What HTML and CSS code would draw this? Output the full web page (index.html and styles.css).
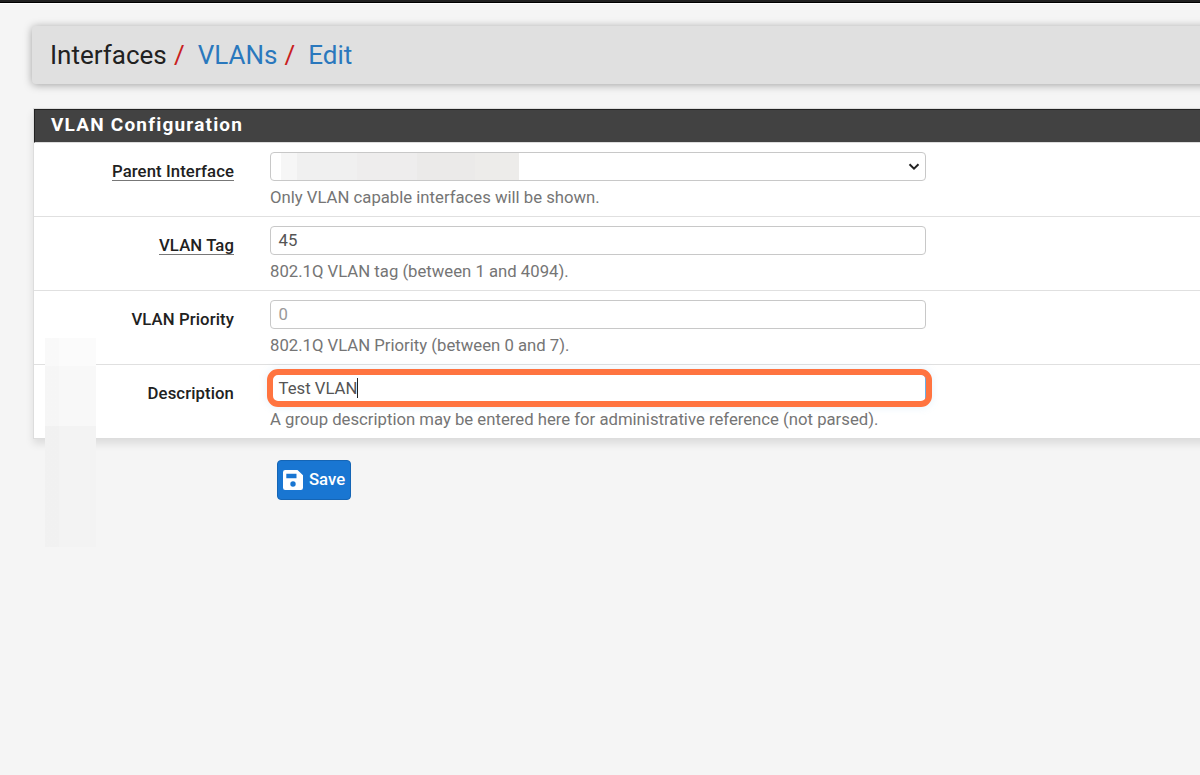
FILE: index.html
```html
<!DOCTYPE html>
<html lang="en">
<head>
<meta charset="utf-8">
<title>Interfaces: VLANs: Edit</title>
<link rel="stylesheet" href="styles.css">
</head>
<body>
<div class="topbar"></div>
<header class="breadcrumb">
  <span>Interfaces</span><span class="sep">/</span><a>VLANs</a><span class="sep">/</span><a>Edit</a>
</header>
<main class="panel">
  <h2 class="panel-title">VLAN Configuration</h2>
  <div class="row">
    <div class="label"><span class="required">Parent Interface</span></div>
    <div class="field">
      <div class="control select">
        <span class="redacted"></span>
        <svg width="12" height="8" viewBox="0 0 12 8"><path d="M1.500 1.300 6 5.700l4.500-4.400" fill="none" stroke="#222" stroke-width="2"/></svg>
      </div>
      <p class="help">Only VLAN capable interfaces will be shown.</p>
    </div>
  </div>
  <div class="row">
    <div class="label"><span class="required">VLAN Tag</span></div>
    <div class="field">
      <div class="control">45</div>
      <p class="help">802.1Q VLAN tag (between 1 and 4094).</p>
    </div>
  </div>
  <div class="row">
    <div class="label"><span>VLAN Priority</span></div>
    <div class="field">
      <div class="control placeholder">0</div>
      <p class="help">802.1Q VLAN Priority (between 0 and 7).</p>
    </div>
  </div>
  <div class="row">
    <div class="label"><span>Description</span></div>
    <div class="field">
      <div class="control focused"><span>Test VLAN</span><i class="caret"></i></div>
      <p class="help">A group description may be entered here for administrative reference (not parsed).</p>
    </div>
  </div>
</main>
<button class="save">
  <svg width="20" height="20" viewBox="0 0 20 20"><path fill="#fff" fill-rule="evenodd" d="M2.200 0h12.300L20 5.300v12.500a2.200 2.200 0 0 1-2.200 2.200H2.200A2.200 2.200 0 0 1 0 17.800V2.200A2.200 2.200 0 0 1 2.200 0ZM3.300 3.800v4.400h10.200V3.800ZM10 11.300a2.700 2.700 0 1 0 0 5.400a2.700 2.700 0 0 0 0-5.400Z"/></svg>
  <span>Save</span>
</button>
<div class="smudge"></div>
</body>
</html>
```
FILE: styles.css
```css
* { box-sizing: border-box; }
body {
  margin: 0;
  height: 775px;
  overflow: hidden;
  position: relative;
  background: #f5f5f5;
  font-family: Roboto, "Liberation Sans", sans-serif;
  font-size: 16px;
  color: #212121;
}
.topbar {
  height: 4px;
  background: #212121;
  border-bottom: 1px solid #fff;
  box-shadow: inset 0 -1px #000;
}
.breadcrumb {
  display: flex;
  align-items: center;
  width: 1200px;
  height: 58px;
  margin: 22px 0 0 32px;
  padding: 0 0 1px 18px;
  border-radius: 4px;
  background: #e0e0e0;
  box-shadow: 0 1px 9px rgba(0, 0, 0, .35);
  font-size: 26px;
  line-height: 32px;
}
.breadcrumb a { color: #2a78bd; }
.breadcrumb .sep { color: #c9211e; margin: 0 13px 0 7.2px; }
.panel {
  width: 1200px;
  height: 331px;
  margin: 24px 0 0 33px;
  border: 1px solid #ddd;
  background: #fff;
  box-shadow: 0 5px 8px rgba(0, 0, 0, .1);
}
.panel-title {
  height: 34px;
  margin: 0;
  padding-left: 16px;
  border: 1px solid #222;
  border-bottom-color: #ddd;
  background: #424242;
  color: #fff;
  font-size: 19px;
  font-weight: 700;
  line-height: 30px;
  letter-spacing: 1.2px;
}
.row {
  display: flex;
  height: 74px;
  padding-top: 9px;
  border-bottom: 1px solid #e0e0e0;
}
.row:last-child { border-bottom: 0; height: 73px; }
.label {
  width: 200px;
  text-align: right;
  font-size: 16.72px;
  font-weight: 500;
  letter-spacing: .1px;
  line-height: 20px;
  padding-top: 9px;
}
.label span { display: inline-block; height: 20px; white-space: nowrap; }
.required { border-bottom: 1px solid #777; }
.field { margin-left: 36px; width: 656px; }
.control {
  display: flex;
  align-items: center;
  position: relative;
  height: 29px;
  padding: 0 8px 1px 7.5px;
  border: 1px solid #c8c8c8;
  border-radius: 4px;
  background: #fff;
  color: #555;
  font-size: 16.72px;
}
.select { justify-content: space-between; padding: 0 5.5px 0 10px; }
.placeholder { color: #999; }
.redacted {
  width: 238px;
  height: 27px;
  background: linear-gradient(90deg, #f6f6f6 16px, #f0f0f0 16px 76px, #eeeded 76px 136px, #ebeae9 136px 194px, #edecea 194px);
}
.focused { border-color: #66afe9; }
.focused::after {
  content: "";
  position: absolute;
  inset: -6px -7px -5px -4px;
  border: 6px solid #ff7440;
  border-radius: 11px;
  box-shadow: 0 0 8px rgba(102, 175, 233, .18);
}
.caret { width: 1px; height: 20px; background: #222; }
.help {
  margin: 6px 0 0;
  color: #757575;
  font-size: 16.72px;
  line-height: 20px;
  white-space: nowrap;
}
.save {
  display: flex;
  align-items: center;
  gap: 6px;
  width: 74px;
  height: 40px;
  margin: 21px 0 0 277px;
  padding: 0 0 0 5px;
  border: 1px solid #1565b5;
  border-radius: 4px;
  background: #1976d2;
  color: #fff;
  font: 500 16.72px/20px Roboto, sans-serif;
}
.save span { margin-bottom: 2px; }
.smudge {
  position: absolute;
  left: 45px;
  top: 338px;
  width: 51px;
  height: 209px;
  background:
    linear-gradient(90deg, rgba(0, 0, 0, .008) 14px, transparent 14px),
    linear-gradient(#fbfbfb 28px, #f8f8f8 28px 88px, #f3f3f3 88px);
}
```
